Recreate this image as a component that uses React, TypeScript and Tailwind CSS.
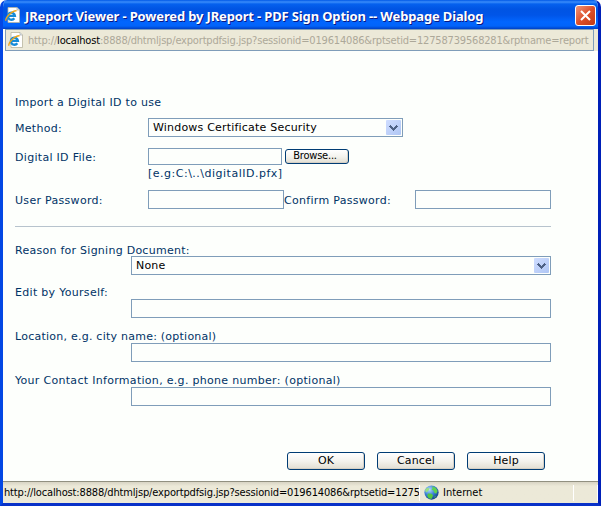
import type { ReactNode } from "react";
import clsx from "clsx";

const UI_FONT = "font-['DejaVu_Sans_Condensed','DejaVu_Sans',sans-serif] [font-stretch:condensed]";

function PageIcon({ className }: { className?: string }) {
  return (
    <svg viewBox="0 0 16 16" className={clsx("h-4 w-4 shrink-0", className)}>
      <path d="M3 .5h9l2.500 2.500v12.500H3z" fill="#fff" stroke="#b9b5a0" strokeWidth=".8" />
      <path d="M12 .5V3h2.500" fill="#dde6ef" stroke="#aaa" strokeWidth=".7" />
      <path d="M9.300 11.200A3.500 3.500 0 1 1 9.900 8.900H3.600" fill="none" stroke="#168bd8" strokeWidth="2.400" />
      <path d="M1 13.800C-.2 11 7.200 3.300 11.600 3.700" fill="none" stroke="#eda51b" strokeWidth="1.400" />
    </svg>
  );
}

function GlobeIcon() {
  return (
    <svg viewBox="0 0 16 16" className="h-[15px] w-[15px] shrink-0">
      <defs>
        <radialGradient id="sea" cx="35%" cy="30%" r="75%">
          <stop offset="0" stopColor="#b8dcfb" />
          <stop offset=".5" stopColor="#3f86d8" />
          <stop offset="1" stopColor="#103f86" />
        </radialGradient>
      </defs>
      <circle cx="8" cy="8" r="7.6" fill="url(#sea)" />
      <path d="M8.500 1.200l4 1.600 2 3.700-1.500 2.700-2-1-1-2.500-2-.5 1.200-1.700z" fill="#5fd24e" />
      <path d="M1 5l2.700-2 2.300.8-1.500 2.700L2 8z" fill="#9be084" />
      <path d="M4.500 9l3.500.3 1.700 2-1.700 3.700-3-.8-1.700-3zM11 12.500l2-1-1.500 2.300z" fill="#55c840" />
    </svg>
  );
}

function Select({ value, className }: { value: string; className: string }) {
  return (
    <div className={clsx("flex h-[19px] items-center justify-between border border-[#7f9db9] bg-[#fdfffc] pr-px pl-1 text-black", className)}>
      <span className="pt-px leading-[16px] tracking-[0.2px]">{value}</span>
      <span className="flex h-[15px] w-[15px] items-center justify-center rounded-[1px] bg-linear-to-br from-[#cfddff] to-[#afc6f4]">
        <svg viewBox="0 0 9 6" className="h-[6px] w-[9px]" shapeRendering="crispEdges">
          <path d="M1 0h1v1h1v1h1v1h1V2h1V1h1V0h1v1h1v1H8v1H7v1H6v1H5v1H4V5H3V4H2V3H1V2H0V1h1z" fill="#4d6185" />
        </svg>
      </span>
    </div>
  );
}

function Input({ className }: { className?: string }) {
  return <input className={clsx("block shrink-0 border border-[#7f9db9] bg-[#fdfffc] outline-none", className)} />;
}

function Button({ children, className }: { children: ReactNode; className: string }) {
  return (
    <button
      className={clsx(
        "flex shrink-0 items-center justify-center rounded-[3px] border border-[#003c74] bg-linear-to-b from-white via-[#f4f3ee] to-[#e2ded2] text-black shadow-[inset_-1px_-1px_0_#d6d0c5]",
        className,
      )}
    >
      {children}
    </button>
  );
}

// Label with a full-width field hanging below it
function Field({ label, className, children }: { label: string; className: string; children: ReactNode }) {
  return (
    <div className={className}>
      <div className="h-[13px]">{label}</div>
      <div className="ml-[116px]">{children}</div>
    </div>
  );
}

export default function App() {
  return (
    <div className="h-[506px] w-[601px] bg-white">
      <div className="flex h-full flex-col overflow-hidden rounded-t-[7px] border-x-[3px] border-b-[3px] border-x-[#0347e4] border-b-[#0831c8] bg-[#fdfffc] [border-right-color:#0020b8]">
        {/* Title bar */}
        <div className="-mx-[3px] flex h-[29px] shrink-0 items-center bg-[linear-gradient(to_bottom,#0058e6_0,#3a8cfa_2px,#0561ee_4px,#0054e3_9px,#0055e8_15px,#0266ff_22px,#0264fa_26px,#0040c4_29px)] pr-[5px] pl-[5px]">
          <PageIcon />
          <span className="ml-1 whitespace-nowrap pt-[2px] font-['Noto_Sans',sans-serif] text-[13px] leading-[16px] font-bold tracking-[-0.15px] text-white [text-shadow:1px_1px_0_#0a1883]">
            JReport Viewer - Powered by JReport - PDF Sign Option -- Webpage Dialog
          </span>
          <button className="mt-[2px] ml-auto flex h-[21px] w-[21px] items-center justify-center rounded-[3px] border border-white bg-linear-to-br from-[#ee9478] via-[#dd4f29] to-[#c23a12]">
            <svg viewBox="0 0 11 11" className="h-[11px] w-[11px]">
              <path d="M1 1l9 9M10 1l-9 9" stroke="#fff" strokeWidth="2" />
            </svg>
          </button>
        </div>

        {/* Address bar */}
        <div className="flex h-[22px] shrink-0 bg-[#ece9d8]">
          <div className="w-[2px] bg-[#fdfffc]" />
          <div className="flex w-[589px] items-center border border-[#7f9db9] pl-[2px]">
            <PageIcon />
            <span className={clsx("ml-1 pt-[2px] whitespace-nowrap text-[11px] tracking-[-0.18px] text-[#aca899]", UI_FONT)}>
              http://<span className="text-black">localhost</span>
              :8888/dhtmljsp/exportpdfsig.jsp?sessionid=019614086&amp;rptsetid=1275873956{"8281"}&amp;rptname=report
            </span>
          </div>
        </div>

        {/* Form */}
        <div className="flex h-[430px] shrink-0 flex-col pt-[44px] pl-3 font-['DejaVu_Sans',Verdana,sans-serif] text-[11px] tracking-[0.3px] whitespace-nowrap text-[#003366]">
          <div className="h-[23px] leading-[15px]">Import a Digital ID to use</div>
          <div className="flex h-[30px]">
            <span className="w-[133px] leading-[21px]">Method:</span>
            <Select value="Windows Certificate Security" className="w-[255px]" />
          </div>
          <div className="flex h-[17px]">
            <span className="w-[133px] leading-[19px]">Digital ID File:</span>
            <Input className="h-[17px] w-[134px]" />
            <Button className={clsx("mt-px ml-[3px] h-[15px] w-[64px] pr-1 text-[11px] tracking-[-0.2px]", UI_FONT)}>Browse...</Button>
          </div>
          <div className="ml-[133px] h-[25px] leading-[17px] tracking-[0.5px]">[e.g:C:\..\digitalID.pfx]</div>
          <div className="flex h-[36px]">
            <span className="w-[133px] leading-[21px]">User Password:</span>
            <Input className="h-[19px] w-[136px]" />
            <span className="w-[131px] leading-[21px]">Confirm Password:</span>
            <Input className="h-[19px] w-[136px]" />
          </div>
          <div className="h-px w-[536px] bg-[#b7c3cd]" />

          <Field label="Reason for Signing Document:" className="mt-4 h-[42px] leading-[15px] tracking-[0.26px]">
            <Select value="None" className="w-[420px]" />
          </Field>
          <Field label="Edit by Yourself:" className="h-[45px] leading-[15px]">
            <Input className="mt-px h-[19px] w-[420px]" />
          </Field>
          <Field label="Location, e.g. city name: (optional)" className="h-[44px] leading-[13px] tracking-[0.24px]">
            <Input className="h-[19px] w-[420px]" />
          </Field>
          <Field label="Your Contact Information, e.g. phone number: (optional)" className="h-[78px] leading-[13px]">
            <Input className="h-[19px] w-[420px]" />
          </Field>
          <div className="ml-[272px] flex gap-3 tracking-[0.1px]">
            <Button className="h-[18px] w-[78px]">OK</Button>
            <Button className="h-[18px] w-[78px]">Cancel</Button>
            <Button className="h-[18px] w-[78px]">Help</Button>
          </div>
        </div>

        {/* Status bar */}
        <div className={clsx("flex h-[22px] shrink-0 items-center border-t border-[#919080] bg-linear-to-b from-[#d8d4c4] via-[#ece9d8] via-20% to-[#ece9d8] text-[11px] text-black", UI_FONT)}>
          <span className="w-[416px] pt-[2px] pl-px tracking-[-0.15px] whitespace-nowrap">
            http://localhost:8888/dhtmljsp/exportpdfsig.jsp?sessionid=019614086&amp;rptsetid=1275
          </span>
          <span className="h-[16px] w-px bg-white" />
          <span className="ml-1 flex items-center gap-[4px]">
            <GlobeIcon />
            <span className="pt-[2px]">Internet</span>
          </span>
          <span className="mr-[23px] ml-auto h-[16px] w-px bg-white" />
          <span className="h-[16px] w-px bg-white" />
        </div>
      </div>
    </div>
  );
}
